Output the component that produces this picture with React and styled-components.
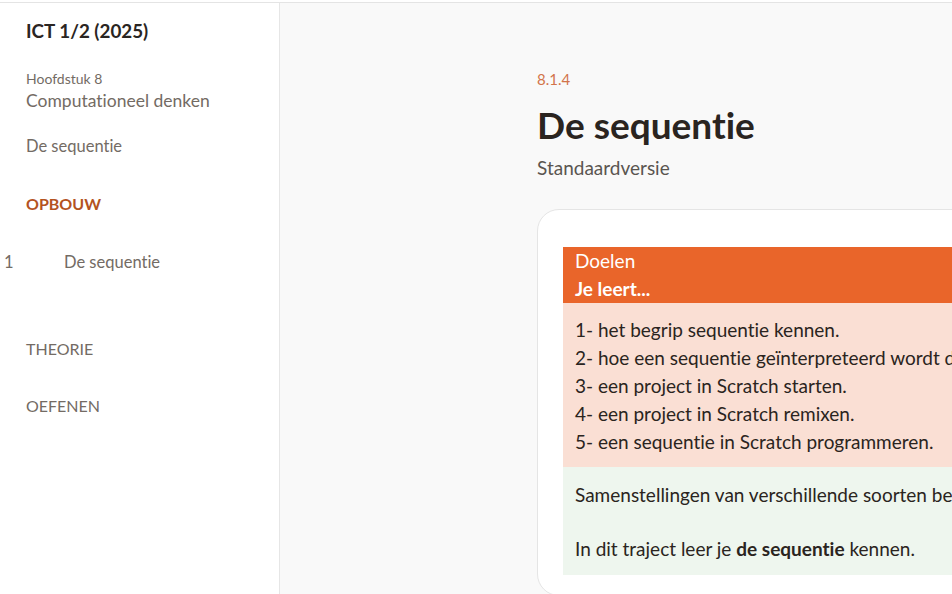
import styled, { createGlobalStyle } from "styled-components";

const GlobalStyle = createGlobalStyle`
  html, body {
    margin: 0;
    padding: 0;
    background: #f9f9f9;
    font-family: Lato, "Open Sans", sans-serif;
    font-variant-ligatures: none;
    overflow: hidden;
  }
`;

const Page = styled.div`
  display: flex;
  flex-direction: column;
  width: 952px;
  height: 594px;
  overflow: hidden;
`;

const TopStrip = styled.div`
  height: 2px;
  background: #ffffff;
  border-bottom: 1px solid #e4e4e4;
`;

const Body = styled.div`
  display: flex;
  flex: 1;
  min-height: 0;
`;

const Sidebar = styled.nav`
  width: 280px;
  flex-shrink: 0;
  background: #ffffff;
  border-right: 1px solid #e6e6e6;
  padding: 16px 0 0 26px;
  box-sizing: border-box;
  color: #736b64;
`;

const CourseTitle = styled.div`
  font-size: 18.8px;
  line-height: 24px;
  font-weight: 700;
  color: #2a2522;
  margin-bottom: 27px;
`;

const ChapterLabel = styled.div`
  font-size: 14px;
  line-height: 18px;
  margin-bottom: 3px;
`;

const ChapterName = styled.div`
  font-size: 17.5px;
  line-height: 20px;
  margin-bottom: 25px;
`;

const NavLink = styled.div`
  font-size: 16.5px;
  line-height: 20px;
  margin-bottom: ${(p) => p.$gap || 38}px;
`;

const SectionHead = styled.div`
  font-size: 16px;
  line-height: 20px;
  font-weight: ${(p) => (p.$active ? 700 : 400)};
  color: ${(p) => (p.$active ? "#b4531f" : "#736b64")};
  margin-bottom: ${(p) => p.$gap}px;
`;

const StepRow = styled.div`
  display: flex;
  align-items: baseline;
  margin-left: -22px;
  font-size: 16.5px;
  line-height: 20px;
  margin-bottom: 67px;
`;

const StepNum = styled.span`
  width: 60px;
`;

const Main = styled.main`
  flex: 1;
  padding: 67px 0 0 257px;
  min-width: 0;
`;

const Number = styled.div`
  font-size: 15px;
  color: #d2744a;
  line-height: 18px;
`;

const Heading = styled.h1`
  margin: 15px 0 0;
  font-size: 37px;
  line-height: 44px;
  font-weight: 700;
  color: #2a2420;
`;

const Subtitle = styled.div`
  margin-top: 10px;
  font-size: 19px;
  line-height: 22px;
  color: #5a5550;
`;

const Card = styled.section`
  margin-top: 30px;
  width: 720px;
  background: #ffffff;
  border: 1px solid #e5e5e5;
  border-radius: 22px;
  padding: 37px 0 20px 25px;
  box-sizing: border-box;
`;

const Goals = styled.div`
  color: #2a2420;
  font-size: 19px;
`;

const GoalsHeader = styled.div`
  background: #e9652a;
  color: #ffffff;
  padding: 0 12px;
  line-height: 28px;
`;

const GoalsHeaderStrong = styled.div`
  font-weight: 700;
`;

const GoalsList = styled.div`
  background: #fadfd4;
  padding: 13px 12px 11px;
  line-height: 28px;
  white-space: nowrap;
`;

const Context = styled.div`
  background: #eef6ee;
  padding: 14px 12px 13px;
  line-height: 27px;
  white-space: nowrap;
`;

const Para = styled.p`
  margin: 0 0 27px;
  &:last-child {
    margin-bottom: 0;
  }
`;

const goals = [
  "1- het begrip sequentie kennen.",
  "2- hoe een sequentie geïnterpreteerd wordt door de computer.",
  "3- een project in Scratch starten.",
  "4- een project in Scratch remixen.",
  "5- een sequentie in Scratch programmeren.",
];

export default function App() {
  return (
    <Page>
      <GlobalStyle />
      <TopStrip />
      <Body>
        <Sidebar>
          <CourseTitle>ICT 1/2 (2025)</CourseTitle>
          <ChapterLabel>Hoofdstuk 8</ChapterLabel>
          <ChapterName>Computationeel denken</ChapterName>
          <NavLink $gap={38}>De sequentie</NavLink>
          <SectionHead $active $gap={38}>
            OPBOUW
          </SectionHead>
          <StepRow>
            <StepNum>1</StepNum>
            <span>De sequentie</span>
          </StepRow>
          <SectionHead $gap={37}>THEORIE</SectionHead>
          <SectionHead $gap={0}>OEFENEN</SectionHead>
        </Sidebar>
        <Main>
          <Number>8.1.4</Number>
          <Heading>De sequentie</Heading>
          <Subtitle>Standaardversie</Subtitle>
          <Card>
            <Goals>
              <GoalsHeader>
                <div>Doelen</div>
                <GoalsHeaderStrong>Je leert...</GoalsHeaderStrong>
              </GoalsHeader>
              <GoalsList>
                {goals.map((g) => (
                  <div key={g}>{g}</div>
                ))}
              </GoalsList>
              <Context>
                <Para>
                  Samenstellingen van verschillende soorten bewerkingen
                  uitvoeren.
                </Para>
                <Para>
                  In dit traject leer je <strong>de sequentie</strong> kennen.
                </Para>
              </Context>
            </Goals>
          </Card>
        </Main>
      </Body>
    </Page>
  );
}
